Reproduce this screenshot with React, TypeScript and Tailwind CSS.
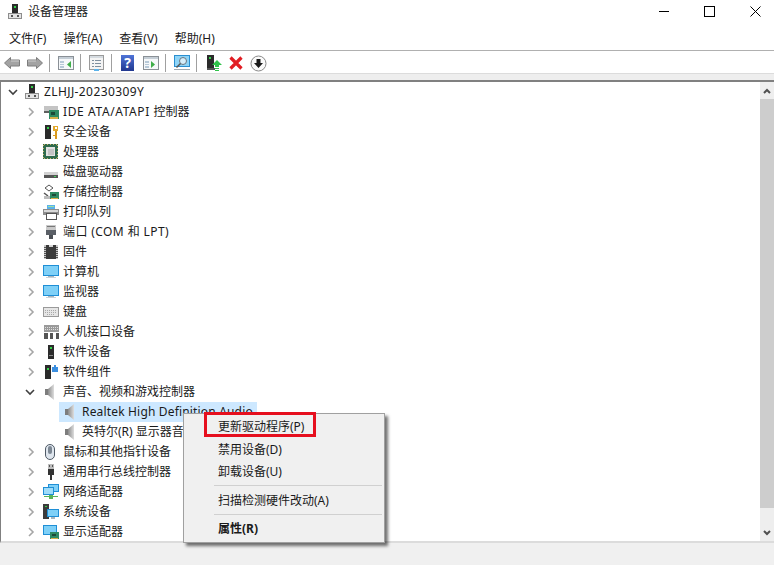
import React from "react";

const font = { fontFamily: '"Noto Sans", "Noto Sans CJK SC", sans-serif' };

const S = ({ children, w = 16, h = 16 }: { children: React.ReactNode; w?: number; h?: number }) => (
  <svg width={w} height={h} viewBox={`0 0 ${w} ${h}`} className="shrink-0" shapeRendering="crispEdges">{children}</svg>
);

const Computer = () => (
  <S>
    <rect x="5" y="0" width="6" height="9" fill="#2b2b2b" />
    <rect x="7" y="2" width="2" height="2" fill="#35d04a" />
    <rect x="1" y="9" width="14" height="6" fill="#8d8d8d" />
    <rect x="2" y="10" width="12" height="4" fill="#e4e4e4" />
    <rect x="4" y="11" width="2" height="2" fill="#555" />
    <rect x="10" y="11" width="2" height="2" fill="#555" />
  </S>
);
const Ide = () => (
  <S>
    <rect x="1" y="2" width="14" height="5" rx="1" fill="#c4c4c4" />
    <rect x="1" y="7" width="14" height="2" fill="#5f5f5f" />
    <rect x="6" y="6" width="10" height="9" fill="#2f8a63" />
    <rect x="8" y="8" width="4" height="3" fill="#1c4a38" />
    <rect x="7" y="13" width="8" height="2" fill="#d6b24a" />
  </S>
);
const Security = () => (
  <S>
    <rect x="2" y="1" width="6" height="14" fill="#2b2b2b" />
    <rect x="4" y="3" width="2" height="2" fill="#35d04a" />
    <rect x="10" y="2" width="5" height="5" fill="#e3a92c" />
    <rect x="12" y="3" width="2" height="2" fill="#fff" />
    <rect x="12" y="7" width="2" height="8" fill="#d99a20" />
    <rect x="10" y="11" width="2" height="1" fill="#d99a20" />
  </S>
);
const Cpu = () => (
  <S>
    <rect x="0" y="0" width="15" height="15" fill="#2f6b4c" />
    <path d="M1 .5h13M1 14.5h13M.5 1v13M14.5 1v13" stroke="#c9b36a" strokeDasharray="1 2" />
    <rect x="3" y="3" width="9" height="9" fill="#e2e2e2" />
    <rect x="5" y="5" width="6" height="6" fill="#c4c4c4" />
  </S>
);
const Disk = () => (
  <S>
    <rect x="1" y="8" width="14" height="3" fill="#d2d2d2" />
    <rect x="1" y="11" width="14" height="3" fill="#555" />
    <rect x="11" y="12" width="2" height="1" fill="#46d45a" />
  </S>
);
const Storage = () => (
  <S>
    <path d="M2 4l4-3 4 3-4 3z" fill="none" stroke="#555" strokeWidth="1" shapeRendering="auto" />
    <path d="M1 9l4 3" stroke="#555" strokeWidth="1.5" shapeRendering="auto" />
    <rect x="1" y="12" width="7" height="3" fill="#bbb" />
    <rect x="7" y="8" width="9" height="7" fill="#2f8a63" />
    <rect x="9" y="10" width="4" height="2" fill="#1c4a38" />
    <rect x="8" y="14" width="7" height="1" fill="#d6b24a" />
  </S>
);
const Printer = () => (
  <S>
    <rect x="4" y="1" width="8" height="4" fill="#5ab2ea" />
    <rect x="5" y="2" width="6" height="1" fill="#9fe0a0" />
    <rect x="0" y="5" width="16" height="6" fill="#8d8d8d" />
    <rect x="1" y="6" width="14" height="2" fill="#d9d9d9" />
    <rect x="3" y="9" width="10" height="6" fill="#fff" stroke="#555" strokeWidth="1" />
  </S>
);
const Port = () => (
  <S>
    <rect x="3" y="1" width="10" height="5" fill="#c9c9c9" />
    <rect x="4" y="2" width="8" height="1" fill="#777" />
    <rect x="3" y="6" width="10" height="5" fill="#5a5f66" />
    <rect x="6" y="11" width="4" height="4" fill="#4b4f55" />
  </S>
);
const Chip = () => (
  <S>
    <rect x="1" y="1" width="14" height="14" fill="#c9c9c9" />
    <rect x="3" y="1" width="10" height="14" fill="#3a3a3a" />
    <rect x="6" y="1" width="4" height="2" fill="#d5d5d5" />
    <path d="M1 3h2M1 5h2M1 7h2M1 9h2M1 11h2M1 13h2M13 3h2M13 5h2M13 7h2M13 9h2M13 11h2M13 13h2" stroke="#555" />
  </S>
);
const Monitor = () => (
  <S>
    <rect x="0" y="1" width="16" height="11" fill="#1f8fd6" />
    <rect x="1" y="2" width="14" height="9" fill="#7fd0f7" />
    <rect x="5" y="12" width="6" height="1" fill="#aab4bb" />
    <rect x="3" y="13" width="10" height="1" fill="#c9d2d8" />
  </S>
);
const Keyboard = () => (
  <S>
    <rect x="0" y="3" width="16" height="10" fill="#9a9a9a" />
    <rect x="1" y="4" width="14" height="8" fill="#e6e6e6" />
    <path d="M2 6h12M2 8h12M4 10h8" stroke="#a9a9a9" strokeDasharray="1 1" />
  </S>
);
const Hid = () => (
  <S>
    <rect x="1" y="1" width="15" height="7" fill="#9a9a9a" />
    <path d="M2 3h13M2 5h13" stroke="#dedede" strokeDasharray="1 1" />
    <rect x="1" y="9" width="4" height="6" fill="#555" />
    <rect x="7" y="9" width="3" height="6" fill="#555" />
    <rect x="13" y="9" width="3" height="6" fill="#555" />
  </S>
);
const Tower = () => (
  <S>
    <rect x="5" y="1" width="6" height="14" fill="#2b2b2b" />
    <rect x="7" y="3" width="2" height="2" fill="#35d04a" />
    <rect x="6" y="11" width="4" height="1" fill="#888" />
  </S>
);
const TowerPuzzle = () => (
  <S>
    <rect x="2" y="1" width="6" height="14" fill="#2b2b2b" />
    <rect x="4" y="4" width="2" height="2" fill="#35d04a" />
    <rect x="9" y="3" width="6" height="5" fill="#3c8fe0" />
    <rect x="11" y="1" width="2" height="2" fill="#3c8fe0" />
  </S>
);
const Speaker = () => (
  <svg width="16" height="16" viewBox="0 0 16 16" className="shrink-0">
    <defs>
      <linearGradient id="spk" x1="0" y1="0" x2="1" y2="0">
        <stop offset="0" stopColor="#8c8c8c" />
        <stop offset="1" stopColor="#dedede" />
      </linearGradient>
    </defs>
    <rect x="2" y="5" width="3" height="6" fill="#7d7d7d" />
    <path d="M5 5l6-5v16l-6-5z" fill="url(#spk)" />
  </svg>
);
const Mouse = () => (
  <svg width="16" height="16" viewBox="0 0 16 16" className="shrink-0">
    <rect x="2.5" y="0.5" width="9" height="15" rx="4.5" fill="#dfe6ee" stroke="#4f5a66" />
    <rect x="5" y="2" width="4" height="8" rx="2" fill="#7d8894" />
  </svg>
);
const Usb = () => (
  <S>
    <rect x="5" y="0" width="6" height="5" fill="#bdbdbd" />
    <rect x="6" y="1" width="1" height="2" fill="#555" />
    <rect x="9" y="1" width="1" height="2" fill="#555" />
    <rect x="5" y="5" width="6" height="6" fill="#333" />
    <rect x="7" y="11" width="2" height="5" fill="#333" />
  </S>
);
const Network = () => (
  <S>
    <rect x="5" y="0" width="11" height="8" fill="#1f8fd6" />
    <rect x="6" y="1" width="9" height="6" fill="#7fd0f7" />
    <rect x="0" y="3" width="11" height="8" fill="#1f8fd6" />
    <rect x="1" y="4" width="9" height="6" fill="#9fdcf9" />
    <rect x="1" y="12" width="14" height="1" fill="#5ab45a" />
    <rect x="6" y="11" width="4" height="4" fill="#5ab45a" />
  </S>
);
const System = () => (
  <S>
    <rect x="0" y="0" width="6" height="15" fill="#3b3b3b" />
    <rect x="2" y="2" width="2" height="1" fill="#35d04a" />
    <rect x="4" y="5" width="12" height="8" fill="#1f8fd6" />
    <rect x="5" y="6" width="10" height="6" fill="#7fd0f7" />
    <rect x="8" y="13" width="4" height="2" fill="#aab4bb" />
  </S>
);
const Display = () => (
  <S>
    <rect x="0" y="1" width="14" height="10" fill="#1f8fd6" />
    <rect x="1" y="2" width="12" height="8" fill="#7fd0f7" />
    <rect x="7" y="8" width="9" height="7" fill="#2f8a63" />
    <rect x="9" y="10" width="4" height="2" fill="#1c4a38" />
    <rect x="8" y="14" width="7" height="1" fill="#d6b24a" />
  </S>
);

const Right = () => (
  <svg width="8" height="10" viewBox="0 0 8 10" className="shrink-0"><path d="M2 1l4 4-4 4" fill="none" stroke="#a6a6a6" strokeWidth="1.6" /></svg>
);
const Down = () => (
  <svg width="10" height="8" viewBox="0 0 10 8" className="shrink-0"><path d="M1 2l4 4 4-4" fill="none" stroke="#404040" strokeWidth="1.6" /></svg>
);

const Row = ({ icon, label, open, cls = "" }: { icon: React.ReactNode; label: React.ReactNode; open?: boolean; cls?: string }) => (
  <div className="flex h-5 items-center">
    <div className="flex w-[42px] shrink-0 justify-end pr-[8px]">{open ? <Down /> : <Right />}</div>
    {icon}
    <span className={`ml-1 whitespace-nowrap text-xs text-[#1a1a1a] ${cls}`}>{label}</span>
  </div>
);
const Child = ({ label, selected, cls = "" }: { label: string; selected?: boolean; cls?: string }) => (
  <div className={`ml-[58px] flex h-5 w-[198px] items-center pl-1 ${selected ? "bg-[#cde8ff]" : ""}`}>
    <Speaker />
    <span className={`ml-[3px] whitespace-nowrap text-xs text-[#1a1a1a] ${cls}`}>{label}</span>
  </div>
);

const Arrow = ({ flip, cls = "" }: { flip?: boolean; cls?: string }) => (
  <svg width="16" height="12" viewBox="0 0 16 12" className={`shrink-0 ${flip ? "-scale-x-100" : ""} ${cls}`}>
    <path d="M.5 6L6.5.5V3H15.5V9H6.5V11.5Z" fill="#a3a3a3" stroke="#7d7d7d" />
    <path d="M7 4h8" stroke="#cfcfcf" />
  </svg>
);
const Sep = ({ cls }: { cls: string }) => <div className={`h-[18px] w-px shrink-0 bg-[#a0a0a0] ${cls}`} />;
const WinPanel = ({ color, flip, cls = "" }: { color: string; flip?: boolean; cls?: string }) => (
  <svg width="16" height="14" viewBox="0 0 16 14" className={`shrink-0 ${cls}`} shapeRendering="crispEdges">
    <rect x="0.5" y="0.5" width="15" height="13" fill="#f6f8fa" stroke="#8a9096" />
    <rect x="1" y="1" width="14" height="2" fill="#c5ced6" />
    <rect x="2" y="5" width="4" height="7" fill="#b7c9d8" />
    <path d="M2 7h4M2 9h4" stroke="#f6f8fa" />
    <path d={flip ? "M8 5l4 3.5-4 3.5z" : "M13 5l-4 3.5 4 3.5z"} fill={color} shapeRendering="auto" />
  </svg>
);

const MenuItem = ({ children, bold }: { children: React.ReactNode; bold?: boolean }) => (
  <div className={`pl-[34px] text-xs text-[#1a1a1a] ${bold ? "font-bold" : ""}`}>{children}</div>
);

export default function App() {
  return (
    <div className="relative flex h-[565px] w-[774px] flex-col overflow-hidden bg-white" style={font}>
      {/* Title bar */}
      <div className="flex h-[25px] shrink-0 items-center justify-between pb-[2px]">
        <div className="flex items-center pl-[7px]">
          <Computer />
          <span className="ml-[5px] text-xs text-[#1a1a1a]">设备管理器</span>
        </div>
        <div className="flex items-center pr-[13px]">
          <div className="h-px w-[10px] bg-black" />
          <div className="ml-[35px] h-[11px] w-[11px] border border-black" />
          <svg width="11" height="11" viewBox="0 0 11 11" className="ml-[35px]"><path d="M0.5 0.5l10 10M10.5 0.5l-10 10" stroke="#000" /></svg>
        </div>
      </div>
      {/* Menu bar */}
      <div className="flex h-[26px] shrink-0 items-center gap-[17px] border-b border-[#b0b0b0] pl-[9px] pt-[2px] text-xs text-[#1a1a1a]">
        <span>文件(F)</span>
        <span>操作(A)</span>
        <span>查看(V)</span>
        <span>帮助(H)</span>
      </div>
      {/* Toolbar */}
      <div className="flex h-[22px] shrink-0 items-center pl-1 pt-[2px]">
        <Arrow />
        <Arrow flip cls="ml-[7px]" />
        <Sep cls="ml-[6px]" />
        <WinPanel color="#3fae49" cls="ml-[8px]" />
        <Sep cls="ml-[6px]" />
        <svg width="15" height="16" viewBox="0 0 15 16" className="ml-[8px] shrink-0" shapeRendering="crispEdges">
          <rect x="0.5" y="0.5" width="14" height="14" fill="#f4f4f4" stroke="#9a9a9a" />
          <rect x="1" y="1" width="13" height="2" fill="#d5dbe0" />
          <path d="M3 5h2M6 5h6M3 8h2M6 8h6M3 11h2M6 11h6" stroke="#7f8f9e" />
          <rect x="5" y="14" width="5" height="2" fill="#5ab2ea" />
        </svg>
        <Sep cls="ml-[7px]" />
        <div className="ml-[9px] flex h-4 w-[13px] shrink-0 items-center justify-center bg-gradient-to-b from-[#4f74d8] to-[#22388f] text-sm font-bold text-white">?</div>
        <WinPanel color="#3fae49" flip cls="ml-[9px]" />
        <Sep cls="ml-[6px]" />
        <svg width="17" height="16" viewBox="0 0 17 16" className="ml-[8px] shrink-0">
          <rect x="0.5" y="0.5" width="15" height="11" fill="#8ed4f7" stroke="#2b8fd0" />
          <circle cx="9" cy="6" r="3.5" fill="#d5eefb" stroke="#6b7680" />
          <path d="M6.5 8.5l-4 4" stroke="#555" strokeWidth="1.5" />
          <rect x="0" y="14" width="16" height="1" fill="#a0aab2" />
        </svg>
        <Sep cls="ml-[5px]" />
        <svg width="15" height="16" viewBox="0 0 15 16" className="ml-[10px] shrink-0">
          <rect x="0" y="0" width="7" height="13" fill="#2b2b2b" />
          <rect x="2" y="2" width="2" height="2" fill="#35d04a" />
          <rect x="0" y="13" width="8" height="2" fill="#555" />
          <path d="M10 5l5 5h-3v2h-4v-2H5z" fill="#2fc24a" />
          <rect x="8" y="13" width="4" height="1" fill="#2fc24a" />
          <rect x="8" y="15" width="4" height="1" fill="#2fc24a" />
        </svg>
        <svg width="14" height="14" viewBox="0 0 14 14" className="ml-[7px] shrink-0"><path d="M1.5 1.5l11 11M12.5 1.5l-11 11" stroke="#e11d23" strokeWidth="3.2" /></svg>
        <svg width="17" height="17" viewBox="0 0 17 17" className="ml-[7px] shrink-0">
          <circle cx="8.5" cy="8.5" r="7.5" fill="#fafafa" stroke="#8a8a8a" />
          <path d="M6.5 4h4v4h2.5l-4.5 5L4 8h2.5z" fill="#1a1a1a" />
        </svg>
      </div>
      <div className="h-[7px] shrink-0 border-t border-[#dcdcdc] bg-[#eeeeee]" />
      {/* Body */}
      <div className="flex h-[463px] shrink-0 border-t-2 border-l border-b-2 border-[#808080] border-b-[#dcdcdc]">
        <div className="min-w-0 flex-1 overflow-hidden">
          <div className="flex h-5 items-center">
            <div className="flex w-[23px] shrink-0 justify-center pl-[1px]"><Down /></div>
            <Computer />
            <span className="ml-1 text-xs tracking-[0.4px] text-[#1a1a1a]">ZLHJJ-20230309Y</span>
          </div>
          <Row icon={<Ide />} label={<><span className="tracking-[0.6px]">IDE ATA/ATAPI </span>控制器</>} />
          <Row icon={<Security />} label="安全设备" />
          <Row icon={<Cpu />} label="处理器" />
          <Row icon={<Disk />} label="磁盘驱动器" />
          <Row icon={<Storage />} label="存储控制器" />
          <Row icon={<Printer />} label="打印队列" />
          <Row icon={<Port />} label="端口 (COM 和 LPT)" cls="tracking-[0.4px]" />
          <Row icon={<Chip />} label="固件" />
          <Row icon={<Monitor />} label="计算机" />
          <Row icon={<Monitor />} label="监视器" />
          <Row icon={<Keyboard />} label="键盘" />
          <Row icon={<Hid />} label="人机接口设备" />
          <Row icon={<Tower />} label="软件设备" />
          <Row icon={<TowerPuzzle />} label="软件组件" />
          <Row icon={<Speaker />} label="声音、视频和游戏控制器" open />
          <Child label="Realtek High Definition Audio" selected cls="tracking-[0.17px]" />
          <Child label="英特尔(R) 显示器音频" />
          <Row icon={<Mouse />} label="鼠标和其他指针设备" />
          <Row icon={<Usb />} label="通用串行总线控制器" />
          <Row icon={<Network />} label="网络适配器" />
          <Row icon={<System />} label="系统设备" />
          <Row icon={<Display />} label="显示适配器" />
        </div>
        <div className="flex w-[14px] shrink-0 flex-col bg-[#eeeeee]">
          <div className="flex h-[17px] items-center justify-center">
            <svg width="8" height="6" viewBox="0 0 8 6"><path d="M1 5l3-3 3 3" fill="none" stroke="#505050" strokeWidth="2" /></svg>
          </div>
          <div className="h-[409px] bg-[#cdcdcd]" />
          <div className="flex-1" />
          <div className="flex h-[17px] items-center justify-center">
            <svg width="8" height="6" viewBox="0 0 8 6"><path d="M1 1l3 3 3-3" fill="none" stroke="#505050" strokeWidth="2" /></svg>
          </div>
        </div>
      </div>
      {/* Status bar */}
      <div className="flex-1 bg-[#f0f0f0]" />

      {/* Context menu */}
      <div className="absolute left-[183px] top-[413px] flex h-[130px] w-[202px] flex-col border border-[#a0a0a0] bg-[#f0f0f0] pt-[2px] shadow-[3px_3px_3px_rgba(0,0,0,0.55)]">
        <div className="flex h-[22px] shrink-0 items-center"><MenuItem>更新驱动程序(P)</MenuItem></div>
        <div className="flex h-[23px] shrink-0 items-center"><MenuItem>禁用设备(D)</MenuItem></div>
        <div className="flex h-[21px] shrink-0 items-center"><MenuItem>卸载设备(U)</MenuItem></div>
        <div className="my-[3px] ml-[30px] mr-[2px] h-px shrink-0 bg-[#d0d0d0]" />
        <div className="flex h-[24px] shrink-0 items-center"><MenuItem>扫描检测硬件改动(A)</MenuItem></div>
        <div className="mb-[2px] mt-[1px] ml-[30px] mr-[2px] h-px shrink-0 bg-[#d0d0d0]" />
        <div className="flex h-[24px] shrink-0 items-center"><MenuItem bold>属性(R)</MenuItem></div>
      </div>
      {/* Red highlight */}
      <div className="pointer-events-none absolute left-[204px] top-[412px] h-[25px] w-[112px] border-[3px] border-[#e60f1e]" />
    </div>
  );
}
